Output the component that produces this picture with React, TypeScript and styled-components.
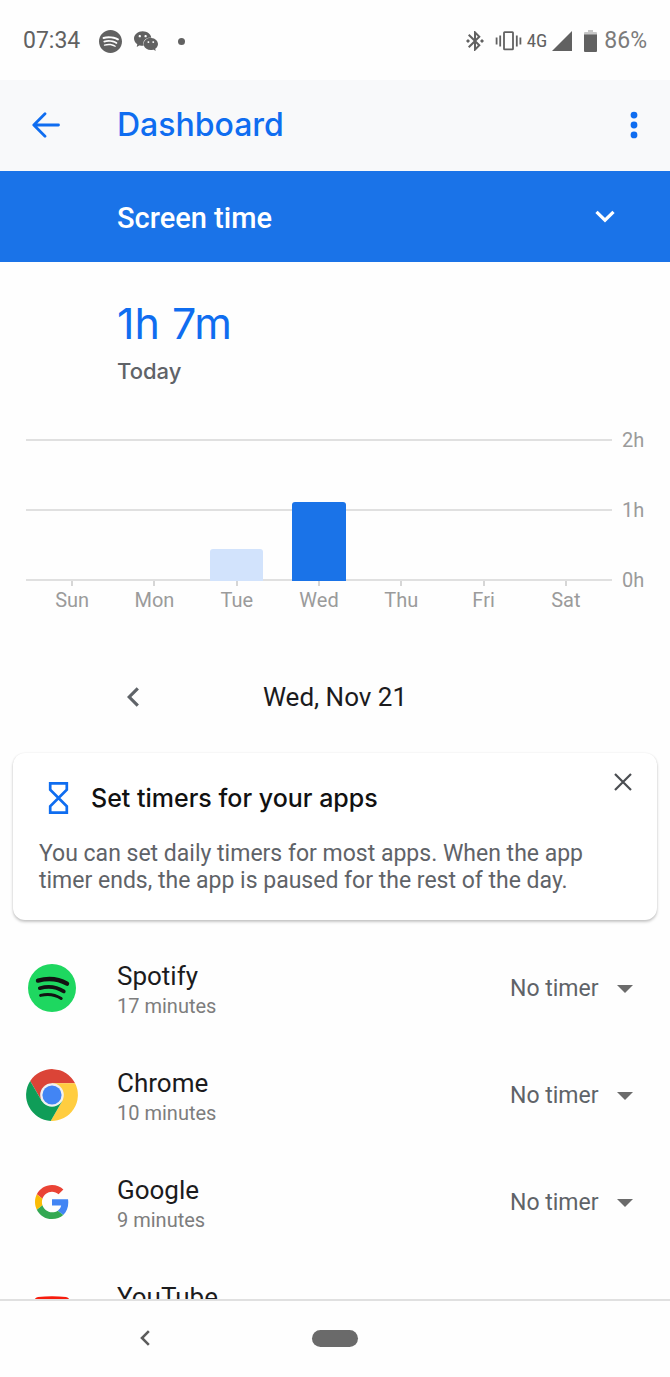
import React from "react";
import styled, { createGlobalStyle } from "styled-components";
import { SiSpotify, SiWechat } from "react-icons/si";
import { MdBluetoothConnected } from "react-icons/md";

const blue = "#1a73e8";
const brandBlue = "#0f6df0";
const body = `Roboto, "Noto Sans", sans-serif`;
const display = `Inter, "Open Sans", sans-serif`;

const GlobalStyle = createGlobalStyle`
  *, *::before, *::after { box-sizing: border-box; }
  body { margin: 0; background: #fefefe; color: #1b1b1d; font-family: ${body}; }
  h1, h2, p, ul { margin: 0; padding: 0; font-weight: inherit; }
  button, select { border: 0; margin: 0; padding: 0; background: none; color: inherit; font: inherit; }
  svg { display: block; flex: none; }
`;

const Screen = styled.div`
  display: flex;
  flex-direction: column;
  height: 100vh;
  overflow: hidden;
`;

const StatusBar = styled.div`
  flex: none;
  display: flex;
  align-items: center;
  justify-content: space-between;
  height: 80px;
  padding: 2px 23px 0;
  color: #616161;
  font-size: 23px;
  line-height: 28px;
`;

const StatusGroup = styled.div<{ $gap: number }>`
  display: flex;
  align-items: center;
  gap: ${(p) => p.$gap}px;
`;

const NotificationDot = styled.span`
  width: 7px;
  height: 7px;
  margin-left: 8px;
  border-radius: 50%;
  background: #616161;
`;

const NetworkType = styled.span`
  font-family: "Roboto Condensed", Roboto, sans-serif;
  font-size: 19px;
`;

const BatteryLevel = styled.span`
  color: #7b7b7b;
`;

const AppBar = styled.header`
  flex: none;
  display: flex;
  align-items: center;
  height: 91px;
  padding: 0 16px 2px;
  background: #f8f9fa;
  color: ${brandBlue};
`;

const IconButton = styled.button<{ $size?: number }>`
  display: grid;
  place-items: center;
  flex: none;
  width: ${(p) => p.$size ?? 40}px;
  height: ${(p) => p.$size ?? 40}px;
  cursor: pointer;
`;

const BackButton = styled(IconButton)`
  width: 60px;
`;

const AppTitle = styled.h1`
  flex: 1;
  padding-left: 41px;
  font-family: ${display};
  font-weight: 500;
  font-size: 32px;
  line-height: 40px;
`;

const MetricPicker = styled.label`
  flex: none;
  display: grid;
  align-items: center;
  height: 91px;
  background: ${blue};
  color: #fff;

  > * { grid-area: 1 / 1; }
  > svg { justify-self: end; margin-right: 55px; pointer-events: none; }
`;

const MetricSelect = styled.select`
  appearance: none;
  width: 100%;
  height: 100%;
  padding: 2px 0 0 117px;
  font-size: 29px;
  font-weight: 500;
  option { color: #1b1b1d; }
`;

const Summary = styled.section`
  flex: none;
  padding: 33px 117px 0;
  font-family: ${display};
`;

const Total = styled.p`
  color: ${brandBlue};
  font-size: 43px;
  line-height: 56px;
`;

const Period = styled.p`
  margin-top: 4px;
  color: #5f6368;
  font-size: 22px;
  font-weight: 500;
  line-height: 32px;
`;

const Chart = styled.section`
  flex: none;
  display: grid;
  grid-template-columns: 1fr 48px;
  margin-top: 52px;
  padding: 0 10px 0 26px;
  color: #9b9b9b;
  font-size: 20px;
  line-height: 24px;
`;

const Plot = styled.div`
  display: grid;
  grid-template-rows: 142px;
  > * { grid-area: 1 / 1; }
`;

const GridLines = styled.div`
  display: flex;
  flex-direction: column;
  justify-content: space-between;
`;

const GridLine = styled.span`
  height: 2px;
  background: #e0e0e0;
`;

const Bars = styled.div`
  display: grid;
  grid-template-columns: repeat(7, 1fr);
  align-items: end;
  justify-items: center;
  padding: 0 5px;
`;

const Bar = styled.span<{ $active: boolean }>`
  width: 65%;
  border-radius: 3px 3px 0 0;
  background: ${(p) => (p.$active ? blue : "#d2e3fc")};
`;

const HourLabels = styled.div`
  display: flex;
  flex-direction: column;
  justify-content: space-between;
  height: 164px;
  margin: -11px 0;
  padding-left: 10px;
`;

const DayLabels = styled.div`
  display: grid;
  grid-template-columns: repeat(7, 1fr);
  padding: 0 5px;
  text-align: center;
`;

const Day = styled.span`
  display: flex;
  flex-direction: column;
  align-items: center;
  gap: 2px;
  &::before { content: ""; width: 2px; height: 5px; background: #d6d6d6; }
`;

const DateNav = styled.div`
  flex: none;
  display: grid;
  grid-template-columns: 117px 1fr 117px;
  align-items: center;
  margin-top: 69px;
  font-size: 26px;
  line-height: 32px;
  color: #1b1b1d;
`;

const DateLabel = styled.span`
  grid-area: 1 / 1 / 2 / 4;
  text-align: center;
`;

const PreviousDay = styled(IconButton)`
  grid-area: 1 / 2;
  color: #5f6368;
`;

const Card = styled.section`
  flex: none;
  margin: 40px 13px 0;
  padding: 25px 26px 26px;
  border-radius: 12px;
  background: #fff;
  box-shadow: 0 2px 3px rgba(0, 0, 0, 0.22), 0 0 2px rgba(0, 0, 0, 0.08);
`;

const CardHeader = styled.div`
  display: flex;
  align-items: center;
  height: 40px;
  padding-left: 9px;
  color: ${brandBlue};
`;

const CardTitle = styled.h2`
  flex: 1;
  padding-left: 22px;
  color: #111;
  font-family: ${display};
  font-size: 25px;
  font-weight: 500;
  line-height: 32px;
`;

const CloseButton = styled(IconButton)`
  align-self: flex-start;
  margin: -16px -12px 0 0;
  color: #4a4d51;
`;

const CardText = styled.p`
  margin-top: 22px;
  color: #5f6368;
  font-size: 23px;
  line-height: 27px;
`;

const AppList = styled.ul`
  flex: 1;
  min-height: 0;
  margin-top: 14px;
  overflow: hidden;
  list-style: none;
`;

const AppRow = styled.li`
  display: grid;
  grid-template-columns: 104px 1fr auto;
  align-items: center;
  height: 107px;
  padding: 0 37px 0 13px;
`;

const AppIcon = styled.span`
  display: grid;
  place-items: center;
  width: 78px;
`;

const AppText = styled.div`
  padding-top: 4px;
`;

const AppName = styled.p`
  font-size: 26px;
  line-height: 32px;
`;

const AppUsage = styled.p`
  color: #7d7d7d;
  font-size: 20px;
  line-height: 28px;
`;

const TimerField = styled.label`
  display: grid;
  align-items: center;
  padding-top: 2px;
  color: #5f6368;
  > * { grid-area: 1 / 1; }
  > svg { justify-self: end; pointer-events: none; }
`;

const TimerSelect = styled.select`
  appearance: none;
  width: 123px;
  height: 40px;
  font-size: 23px;
`;

const NavBar = styled.nav`
  flex: none;
  display: grid;
  grid-template-columns: 1fr 46px 1fr;
  align-items: center;
  height: 78px;
  padding-bottom: 2px;
  border-top: 2px solid #e0e0e0;
  color: #5c5c5c;
`;

const NavBack = styled(IconButton)`
  margin-left: 125px;
`;

const HomePill = styled.button`
  height: 17px;
  border-radius: 9px;
  background: #6a6a6a;
`;

const VibrateIcon = () => (
  <svg width="27" height="20" viewBox="0 0 27 20" fill="none" stroke="currentColor" strokeWidth="1.8">
    <rect x="9" y="1.2" width="9" height="17.2" rx="0.6" />
    <path d="M5.2 4.5v11M1.6 6.5v7M21.8 4.5v11M25.4 6.5v7" />
  </svg>
);

const SignalIcon = () => (
  <svg width="20" height="20" viewBox="0 0 20 20" fill="currentColor">
    <path d="M20 0v20H0z" />
  </svg>
);

const BatteryIcon = () => (
  <svg width="13" height="22" viewBox="0 0 13 22" fill="currentColor">
    <path d="M4 0h5v2h3q1 0 1 1v2H0V3q0-1 1-1h3z" opacity="0.35" />
    <path d="M0 4.5h13V21q0 1-1 1H1q-1 0-1-1z" />
  </svg>
);

const ArrowLeft = () => (
  <svg width="28" height="26" viewBox="0 0 28 26" fill="none" stroke="currentColor" strokeWidth="2.8" strokeLinecap="round" strokeLinejoin="round">
    <path d="M26.5 13H2M13 1.8 1.8 13 13 24.2" />
  </svg>
);

const MoreIcon = () => (
  <svg width="8" height="28" viewBox="0 0 8 28" fill="currentColor">
    <circle cx="4" cy="4.1" r="3.4" />
    <circle cx="4" cy="14" r="3.4" />
    <circle cx="4" cy="23.9" r="3.4" />
  </svg>
);

const ChevronDown = () => (
  <svg width="20" height="14" viewBox="0 0 20 14" fill="none" stroke="currentColor" strokeWidth="3.2">
    <path d="M1.5 1.8 10 10.2l8.5-8.4" />
  </svg>
);

const ChevronLeft = ({ width = 12, height = 20, stroke = 3.2 }) => (
  <svg width={width} height={height} viewBox="0 0 12 20" fill="none" stroke="currentColor" strokeWidth={stroke}>
    <path d="M10.8 1.3 2.2 10l8.6 8.7" />
  </svg>
);

const HourglassIcon = () => (
  <svg width="21" height="34" viewBox="0 0 21 34" fill="none" stroke="currentColor" strokeWidth="2.7">
    <path d="M2.2 2.4h16.6v6.4L10.5 17l8.3 8.2v6.4H2.2v-6.4L10.5 17 2.2 8.8z" />
  </svg>
);

const CloseIcon = () => (
  <svg width="18" height="18" viewBox="0 0 18 18" fill="none" stroke="currentColor" strokeWidth="2.2">
    <path d="m1 1 16 16M17 1 1 17" />
  </svg>
);

const CaretDown = () => (
  <svg width="16" height="8" viewBox="0 0 16 8" fill="#6b6b6b">
    <path d="M0 0h16L8 8z" />
  </svg>
);

const SpotifyLogo = () => (
  <svg width="48" height="48" viewBox="0 0 48 48" fill="none" stroke="#121212" strokeLinecap="round">
    <circle cx="24" cy="24" r="24" fill="#1ed760" stroke="none" />
    <path d="M10 16.6q16-4.2 29 3" strokeWidth="4.4" />
    <path d="M11.800 24.200q13-3.800 24 3.200" strokeWidth="3.7" />
    <path d="M12.600 31.400q11-3 20.600 3" strokeWidth="3" />
  </svg>
);

const ChromeLogo = () => (
  <svg width="52" height="52" viewBox="0 0 52 52">
    <path d="M4.200 11.900A26 26 0 0 1 49.100 14.200H26L15.800 31.900z" fill="#db4437" />
    <path d="M49.100 14.200A26 26 0 0 1 24.700 51.900L36.200 31.900 26 14.200z" fill="#ffcd40" />
    <path d="M24.700 51.900A26 26 0 0 1 4.200 11.900L15.800 31.900H36.200z" fill="#0f9d58" />
    <circle cx="26" cy="26" r="11.8" fill="#f1f1f1" />
    <circle cx="26" cy="26" r="9.6" fill="#4285f4" />
  </svg>
);

const GoogleLogo = () => (
  <svg width="34" height="34" viewBox="0 0 48 48">
    <path fill="#ea4335" d="M24 9.5c3.54 0 6.71 1.22 9.21 3.6l6.85-6.85C35.9 2.38 30.47 0 24 0 14.62 0 6.51 5.38 2.56 13.22l7.98 6.19C12.43 13.72 17.74 9.5 24 9.5z" />
    <path fill="#4285f4" d="M46.98 24.55c0-1.57-.15-3.09-.38-4.55H24v9.02h12.94c-.58 2.96-2.26 5.48-4.78 7.18l7.73 6c4.51-4.18 7.09-10.36 7.09-17.65z" />
    <path fill="#fbbc05" d="M10.53 28.59c-.48-1.45-.76-2.99-.76-4.59s.27-3.14.76-4.590l-7.980-6.190C.92 16.46 0 20.12 0 24c0 3.88.92 7.54 2.56 10.78l7.97-6.19z" />
    <path fill="#34a853" d="M24 48c6.48 0 11.93-2.13 15.89-5.81l-7.73-6c-2.15 1.45-4.92 2.3-8.16 2.3-6.26 0-11.57-4.22-13.47-9.91l-7.98 6.19C6.51 42.62 14.62 48 24 48z" />
  </svg>
);

const YouTubeLogo = () => (
  <svg width="36" height="25" viewBox="0 0 36 25">
    <path d="M4 .9Q18-.4 32 .9q3.200.4 3.500 3.600.8 8 0 16-.3 3.200-3.500 3.600-14 1.300-28 0Q.8 23.700.5 20.500q-.8-8 0-16Q.8 1.300 4 .9z" fill="#f61c0d" />
    <path d="m14.400 7.200 9.300 5.300-9.300 5.300z" fill="#fff" />
  </svg>
);

const week = [
  { day: "Sun", minutes: 0 },
  { day: "Mon", minutes: 0 },
  { day: "Tue", minutes: 27 },
  { day: "Wed", minutes: 67 },
  { day: "Thu", minutes: 0 },
  { day: "Fri", minutes: 0 },
  { day: "Sat", minutes: 0 },
];
const hours = ["2h", "1h", "0h"];
const today = "Wed";

const apps = [
  { name: "Spotify", usage: "17 minutes", icon: <SpotifyLogo /> },
  { name: "Chrome", usage: "10 minutes", icon: <ChromeLogo /> },
  { name: "Google", usage: "9 minutes", icon: <GoogleLogo /> },
  { name: "YouTube", usage: "8 minutes", icon: <YouTubeLogo /> },
];

export default function App() {
  return (
    <Screen>
      <GlobalStyle />
      <StatusBar>
        <StatusGroup $gap={19}>
          <span>07:34</span>
          <StatusGroup $gap={12}>
            <SiSpotify size={23} />
            <SiWechat size={24} />
            <NotificationDot />
          </StatusGroup>
        </StatusGroup>
        <StatusGroup $gap={12}>
          <StatusGroup $gap={5}>
            <StatusGroup $gap={8}>
              <MdBluetoothConnected size={24} />
              <VibrateIcon />
            </StatusGroup>
            <NetworkType>4G</NetworkType>
            <SignalIcon />
          </StatusGroup>
          <StatusGroup $gap={7}>
            <BatteryIcon />
            <BatteryLevel>86%</BatteryLevel>
          </StatusGroup>
        </StatusGroup>
      </StatusBar>

      <AppBar>
        <BackButton aria-label="Back"><ArrowLeft /></BackButton>
        <AppTitle>Dashboard</AppTitle>
        <IconButton aria-label="More options"><MoreIcon /></IconButton>
      </AppBar>

      <MetricPicker>
        <MetricSelect aria-label="Metric">
          <option>Screen time</option>
        </MetricSelect>
        <ChevronDown />
      </MetricPicker>

      <Summary>
        <Total>1h 7m</Total>
        <Period>Today</Period>
      </Summary>

      <Chart aria-label="Screen time this week">
        <Plot>
          <GridLines>
            {hours.map((h) => <GridLine key={h} />)}
          </GridLines>
          <Bars>
            {week.map(({ day, minutes }) => (
              <Bar key={day} $active={day === today} style={{ height: `${(minutes / 120) * 100}%` }} />
            ))}
          </Bars>
        </Plot>
        <HourLabels>
          {hours.map((h) => <span key={h}>{h}</span>)}
        </HourLabels>
        <DayLabels>
          {week.map(({ day }) => <Day key={day}>{day}</Day>)}
        </DayLabels>
      </Chart>

      <DateNav>
        <DateLabel>Wed, Nov 21</DateLabel>
        <PreviousDay $size={32} aria-label="Previous day"><ChevronLeft /></PreviousDay>
      </DateNav>

      <Card>
        <CardHeader>
          <HourglassIcon />
          <CardTitle>Set timers for your apps</CardTitle>
          <CloseButton aria-label="Dismiss"><CloseIcon /></CloseButton>
        </CardHeader>
        <CardText>
          You can set daily timers for most apps. When the app timer ends, the app is paused for the rest of the day.
        </CardText>
      </Card>

      <AppList>
        {apps.map(({ name, usage, icon }) => (
          <AppRow key={name}>
            <AppIcon>{icon}</AppIcon>
            <AppText>
              <AppName>{name}</AppName>
              <AppUsage>{usage}</AppUsage>
            </AppText>
            <TimerField>
              <TimerSelect aria-label={`${name} timer`}>
                <option>No timer</option>
              </TimerSelect>
              <CaretDown />
            </TimerField>
          </AppRow>
        ))}
      </AppList>

      <NavBar>
        <NavBack aria-label="Back"><ChevronLeft width={10} height={16} /></NavBack>
        <HomePill aria-label="Home" />
      </NavBar>
    </Screen>
  );
}
